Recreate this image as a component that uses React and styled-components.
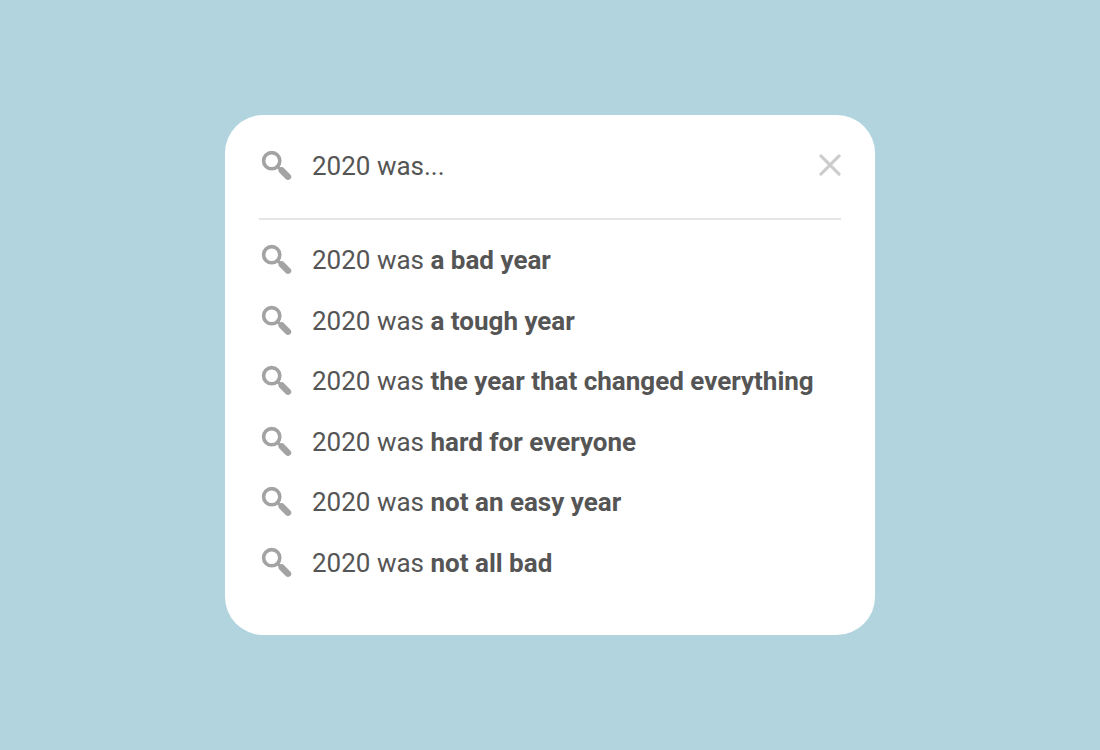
import React, { useState } from "react";
import styled, { createGlobalStyle } from "styled-components";

const GlobalStyle = createGlobalStyle`
  * { box-sizing: border-box; }
  body {
    margin: 0;
    background: #b1d4df;
    color: #555555;
    font-family: Roboto, "Liberation Sans", sans-serif;
    font-size: 26px;
    line-height: 32px;
  }
`;

const Page = styled.main`
  min-height: 100vh;
  padding: 24px;
  display: flex;
  align-items: center;
  justify-content: center;
`;

const Card = styled.section`
  width: 100%;
  max-width: 650px;
  padding: 31px 34px 42px;
  background: #ffffff;
  border-radius: 38px;
`;

const SearchBar = styled.form`
  display: flex;
  align-items: center;
  gap: 19px;
  padding-bottom: 32px;
  border-bottom: 2px solid #e5e5e5;
`;

const SearchInput = styled.input`
  flex: 1;
  min-width: 0;
  height: 40px;
  padding: 0;
  border: 0;
  outline: 0;
  background: transparent;
  color: inherit;
  font: inherit;
`;

const ClearButton = styled.button`
  display: flex;
  padding: 0 0 2px;
  border: 0;
  background: none;
  color: #cccccc;
  cursor: pointer;
`;

const Suggestions = styled.ul`
  display: grid;
  grid-auto-rows: 1fr;
  min-height: 363px;
  margin: 10px 0 0;
  padding: 0;
  list-style: none;
`;

const Suggestion = styled.li`
  display: flex;
`;

const SuggestionLink = styled.a`
  flex: 1;
  display: flex;
  align-items: center;
  gap: 19px;
  color: inherit;
  text-decoration: none;
`;

const Completion = styled.strong`
  font-weight: 700;
`;

const Icon = styled.svg`
  flex: none;
  width: ${(p) => p.$size}px;
  height: ${(p) => p.$size}px;
  fill: none;
  stroke: currentColor;
  stroke-linecap: round;
`;

const GreyIcon = styled(Icon)`
  color: #a3a3a3;
`;

function SearchIcon() {
  return (
    <GreyIcon $size={34} viewBox="0 0 34 34" aria-hidden="true">
      <circle cx="12.7" cy="11.7" r="8.1" strokeWidth="3.6" />
      <path d="M18.4 17.4L22 21" strokeWidth="3.2" />
      <path d="M22.8 21.5L29 27.7" strokeWidth="6.4" />
    </GreyIcon>
  );
}

const endings = [
  "a bad year",
  "a tough year",
  "the year that changed everything",
  "hard for everyone",
  "not an easy year",
  "not all bad",
];

export default function App() {
  const [query, setQuery] = useState("2020 was...");
  return (
    <>
      <GlobalStyle />
      <Page>
        <Card>
          <SearchBar role="search" onSubmit={(e) => e.preventDefault()}>
            <SearchIcon />
            <SearchInput
              type="text"
              aria-label="Search"
              value={query}
              onChange={(e) => setQuery(e.target.value)}
            />
            <ClearButton type="button" aria-label="Clear" onClick={() => setQuery("")}>
              <Icon $size={22} viewBox="0 0 22 22" aria-hidden="true">
                <path d="M1.9 1.9L20.1 20.1M20.1 1.9L1.9 20.1" strokeWidth="3" />
              </Icon>
            </ClearButton>
          </SearchBar>
          <Suggestions>
            {endings.map((ending) => (
              <Suggestion key={ending}>
                <SuggestionLink href="#">
                  <SearchIcon />
                  <span>
                    2020 was <Completion>{ending}</Completion>
                  </span>
                </SuggestionLink>
              </Suggestion>
            ))}
          </Suggestions>
        </Card>
      </Page>
    </>
  );
}
